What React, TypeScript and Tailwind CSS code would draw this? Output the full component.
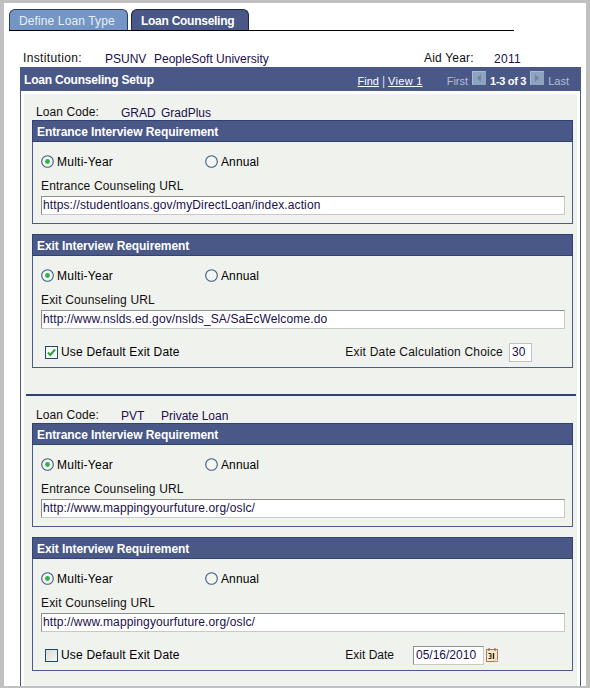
import React from 'react';

const RadioDot = ({ checked }: { checked?: boolean }) => (
  <svg width="13" height="13" viewBox="0 0 13 13" className="shrink-0">
    <circle cx="6.5" cy="6.5" r="5.8" fill="#f4f6f2" stroke="#3d5a80" strokeWidth="1.1" />
    {checked && <circle cx="6.5" cy="6.5" r="2.4" fill="#2fb04e" />}
  </svg>
);

const CheckBox = ({ checked }: { checked?: boolean }) => (
  <svg width="13" height="13" viewBox="0 0 13 13" className="shrink-0">
    <defs>
      <linearGradient id="boxFill" x1="0" y1="0" x2="1" y2="1">
        <stop offset="0" stopColor="#d8d8d4" />
        <stop offset="1" stopColor="#f8f8f6" />
      </linearGradient>
    </defs>
    <rect x="0.5" y="0.5" width="12" height="12" fill={checked ? '#f8f8f4' : 'url(#boxFill)'} stroke="#1f4a6e" />
    {checked && <path d="M3 6.5 L5.3 9 L10 3.5" fill="none" stroke="#2aa23a" strokeWidth="2" />}
  </svg>
);

const CalendarIcon = () => (
  <svg width="13" height="15" viewBox="0 0 13 15" className="shrink-0">
    <rect x="0.5" y="1.5" width="11" height="12" fill="#f8e8c0" stroke="#a8786a" />
    <path d="M3 0 V3 M9 0 V3" stroke="#8a5a48" />
    <path d="M8 13.5 L11.5 10 V13.5 Z" fill="#fff8e8" stroke="#a8786a" strokeWidth="0.5" />
    <path d="M2.5 5.5 H5 V10.5 H2.5 M3.5 8 H5" fill="none" stroke="#222" />
    <path d="M7.5 5 V11" stroke="#222" strokeWidth="1.4" />
  </svg>
);

const NavArrow = ({ dir }: { dir: 'left' | 'right' }) => (
  <svg width="14" height="14" viewBox="0 0 14 14" className="shrink-0">
    <rect width="14" height="14" fill="#8ea3bf" />
    <path d="M0.5 13.5 V0.5 H13.5" fill="none" stroke="#a9bbd0" />
    <path
      d={dir === 'left' ? 'M9 3 L5 7 L9 11 Z' : 'M5 3 L9 7 L5 11 Z'}
      fill="#6d86a8"
    />
  </svg>
);

interface SectionProps {
  title: string;
  urlLabel: string;
  url: string;
  footer?: React.ReactNode;
}

const Section = ({ title, urlLabel, url, footer }: SectionProps) => (
  <div className="border border-[#4a5a8c]">
    <div className="h-[22px] -mx-px -mt-px bg-[#4a5888] border border-[#2f4273] pl-[4px] pt-px text-white font-bold leading-[20px] tracking-[-0.07px]">
      {title}
    </div>
    <div className="pl-[8px] pr-[7px] pb-[8px]">
      <div className="flex items-center h-[14px] mt-[12px]">
        <div className="flex items-center gap-[3px] w-[164px]">
          <RadioDot checked />
          <span className="mt-[2px] tracking-[0.25px]">Multi-Year</span>
        </div>
        <div className="flex items-center gap-[3px]">
          <RadioDot />
          <span className="mt-[2px] tracking-[0.1px]">Annual</span>
        </div>
      </div>
      <div className="mt-[11px] h-[14px] leading-[14px] tracking-[0.17px] text-[#101010]">{urlLabel}</div>
      <div className="mt-[3px] h-[19px] bg-white border border-t-[#8f8f8f] border-l-[#8f8f8f] border-r-[#c8c8c8] border-b-[#c8c8c8] pl-px leading-[17px] tracking-[0.12px] text-[#20104a]">
        {url}
      </div>
      {footer}
    </div>
  </div>
);

const LoanCode = ({ code, name }: { code: string; name: string }) => (
  <div className="flex items-center h-[14px] pl-[12px] leading-[14px]">
    <span className="w-[85px] tracking-[0.1px] text-[#101010]">Loan Code:</span>
    <span className="w-[40px] mt-[2px] text-[#20104a]">{code}</span>
    <span className="mt-[2px] text-[#20104a]">{name}</span>
  </div>
);

export default function App() {
  return (
    <div className="w-[590px] h-[688px] overflow-hidden bg-[#c0c0c0] pt-[3px] pr-[4px] pb-[2px] pl-[4px] font-['Liberation_Sans',Arial,sans-serif] text-[12px] text-black">
      <div className="h-[683px] overflow-hidden bg-white pt-[6px] pl-[5px]">
        {/* Tabs */}
        <div className="flex w-[505px] h-[22px] border-b border-black">
          <div className="w-[119px] h-[21px] rounded-t-[6px] border border-b-0 border-[#2b3d5f] bg-[#7496c4] pl-[9px] pt-px leading-[20px] tracking-[0.12px] text-[#e8eef6]">
            Define Loan Type
          </div>
          <div className="ml-[3px] w-[118px] h-[21px] rounded-t-[6px] border border-b-0 border-[#1c2748] bg-[#4a5888] pl-[9px] pt-px leading-[20px] font-bold tracking-[-0.27px] text-white">
            Loan Counseling
          </div>
        </div>

        {/* Institution row */}
        <div className="flex items-center h-[14px] mt-[20px] pl-[14px] leading-[14px]">
          <span className="w-[82px] tracking-[0.35px] text-[#101010]">Institution:</span>
          <span className="w-[49px] mt-[2px] text-[#20104a]">PSUNV</span>
          <span className="w-[270px] mt-[2px] text-[#20104a]">PeopleSoft University</span>
          <span className="w-[70px] tracking-[0.2px] text-[#101010]">Aid Year:</span>
          <span className="mt-[2px] tracking-[0.3px] text-[#20104a]">2011</span>
        </div>

        {/* Main panel */}
        <div className="mt-[2px] ml-[11px] w-[561px] border-x border-[#4a5888]">
          <div className="-mx-px flex items-center h-[24px] bg-[#4a5888] pl-[4px] pr-[12px] text-white">
            <span className="mt-[1px] font-bold tracking-[-0.2px]">Loan Counseling Setup</span>
            <span className="ml-auto mt-[4px] text-[11px] underline">Find</span>
            <span className="mx-[3px] mt-[4px] text-[#d8dce8]">|</span>
            <span className="mt-[4px] text-[11px] tracking-[0.3px] underline">View 1</span>
            <span className="ml-[24px] mt-[4px] text-[11px] text-[#b4bdd2]">First</span>
            <span className="flex ml-[4px] mb-[2px]"><NavArrow dir="left" /></span>
            <span className="ml-[4px] mt-[4px] text-[11px] font-bold tracking-[-0.3px]">1-3 of 3</span>
            <span className="flex ml-[4px] mb-[2px]"><NavArrow dir="right" /></span>
            <span className="ml-[4px] mt-[4px] text-[11px] text-[#b4bdd2]">Last</span>
          </div>
          <div className="mt-[3px] mx-[3px] h-[640px] bg-[#f0f2ee]">
            <div className="pt-[11px]">
              <LoanCode code="GRAD" name="GradPlus" />
            </div>
            <div className="mt-[1px] ml-[8px] mr-[4px] flex flex-col gap-[10px]">
              <Section
                title="Entrance Interview Requirement"
                urlLabel="Entrance Counseling URL"
                url="https://studentloans.gov/myDirectLoan/index.action"
              />
              <Section
                title="Exit Interview Requirement"
                urlLabel="Exit Counseling URL"
                url="http://www.nslds.ed.gov/nslds_SA/SaEcWelcome.do"
                footer={
                  <div className="flex items-center h-[14px] mt-[16px] pl-[4px]">
                    <CheckBox checked />
                    <span className="ml-[3px] tracking-[0.19px]">Use Default Exit Date</span>
                    <span className="ml-auto tracking-[0.2px] text-[#101010]">Exit Date Calculation Choice</span>
                    <div className="ml-[6px] mr-[33px] w-[23px] h-[19px] bg-white border border-[#c0c0c0] pl-[2px] leading-[17px] text-[#20104a]">
                      30
                    </div>
                  </div>
                }
              />
            </div>
            <div className="mt-[26px] ml-[2px] mr-[1px] h-[2px] bg-[#2f4273]" />
            <div className="mt-[12px]">
              <LoanCode code="PVT" name="Private Loan" />
            </div>
            <div className="mt-[1px] ml-[8px] mr-[4px] flex flex-col gap-[10px]">
              <Section
                title="Entrance Interview Requirement"
                urlLabel="Entrance Counseling URL"
                url="http://www.mappingyourfuture.org/oslc/"
              />
              <Section
                title="Exit Interview Requirement"
                urlLabel="Exit Counseling URL"
                url="http://www.mappingyourfuture.org/oslc/"
                footer={
                  <div className="flex items-center h-[14px] mt-[16px] pl-[4px]">
                    <CheckBox />
                    <span className="ml-[3px] tracking-[0.19px]">Use Default Exit Date</span>
                    <span className="ml-auto text-[#101010]">Exit Date</span>
                    <div className="ml-[19px] w-[71px] h-[19px] bg-white border border-t-[#8f8f8f] border-l-[#8f8f8f] border-r-[#c8c8c8] border-b-[#c8c8c8] pl-[2px] leading-[17px] text-[#20104a]">
                      05/16/2010
                    </div>
                    <span className="flex ml-[2px] mr-[66px]"><CalendarIcon /></span>
                  </div>
                }
              />
            </div>
          </div>
        </div>
      </div>
    </div>
  );
}
